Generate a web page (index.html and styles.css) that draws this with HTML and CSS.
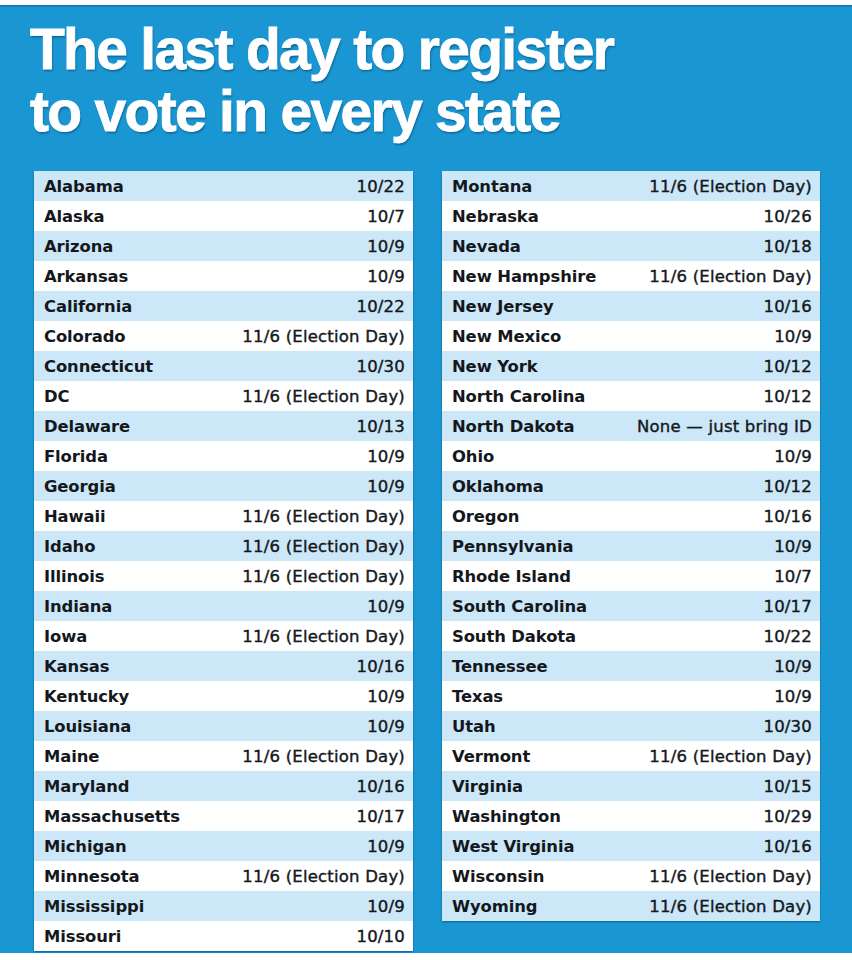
FILE: index.html
```html
<!DOCTYPE html>
<html lang="en">
<head>
<meta charset="utf-8">
<title>The last day to register to vote in every state</title>
<link rel="stylesheet" href="styles.css">
</head>
<body>
<div class="poster">
  <h1 class="title">The last day to register<br>to vote in every state</h1>
  <div class="tables">
    <div class="table">
      <div class="row"><span class="state">Alabama</span><span class="date">10/22</span></div>
      <div class="row"><span class="state">Alaska</span><span class="date">10/7</span></div>
      <div class="row"><span class="state">Arizona</span><span class="date">10/9</span></div>
      <div class="row"><span class="state">Arkansas</span><span class="date">10/9</span></div>
      <div class="row"><span class="state">California</span><span class="date">10/22</span></div>
      <div class="row"><span class="state">Colorado</span><span class="date">11/6 (Election Day)</span></div>
      <div class="row"><span class="state">Connecticut</span><span class="date">10/30</span></div>
      <div class="row"><span class="state">DC</span><span class="date">11/6 (Election Day)</span></div>
      <div class="row"><span class="state">Delaware</span><span class="date">10/13</span></div>
      <div class="row"><span class="state">Florida</span><span class="date">10/9</span></div>
      <div class="row"><span class="state">Georgia</span><span class="date">10/9</span></div>
      <div class="row"><span class="state">Hawaii</span><span class="date">11/6 (Election Day)</span></div>
      <div class="row"><span class="state">Idaho</span><span class="date">11/6 (Election Day)</span></div>
      <div class="row"><span class="state">Illinois</span><span class="date">11/6 (Election Day)</span></div>
      <div class="row"><span class="state">Indiana</span><span class="date">10/9</span></div>
      <div class="row"><span class="state">Iowa</span><span class="date">11/6 (Election Day)</span></div>
      <div class="row"><span class="state">Kansas</span><span class="date">10/16</span></div>
      <div class="row"><span class="state">Kentucky</span><span class="date">10/9</span></div>
      <div class="row"><span class="state">Louisiana</span><span class="date">10/9</span></div>
      <div class="row"><span class="state">Maine</span><span class="date">11/6 (Election Day)</span></div>
      <div class="row"><span class="state">Maryland</span><span class="date">10/16</span></div>
      <div class="row"><span class="state">Massachusetts</span><span class="date">10/17</span></div>
      <div class="row"><span class="state">Michigan</span><span class="date">10/9</span></div>
      <div class="row"><span class="state">Minnesota</span><span class="date">11/6 (Election Day)</span></div>
      <div class="row"><span class="state">Mississippi</span><span class="date">10/9</span></div>
      <div class="row"><span class="state">Missouri</span><span class="date">10/10</span></div>
    </div>
    <div class="table">
      <div class="row"><span class="state">Montana</span><span class="date">11/6 (Election Day)</span></div>
      <div class="row"><span class="state">Nebraska</span><span class="date">10/26</span></div>
      <div class="row"><span class="state">Nevada</span><span class="date">10/18</span></div>
      <div class="row"><span class="state">New Hampshire</span><span class="date">11/6 (Election Day)</span></div>
      <div class="row"><span class="state">New Jersey</span><span class="date">10/16</span></div>
      <div class="row"><span class="state">New Mexico</span><span class="date">10/9</span></div>
      <div class="row"><span class="state">New York</span><span class="date">10/12</span></div>
      <div class="row"><span class="state">North Carolina</span><span class="date">10/12</span></div>
      <div class="row"><span class="state">North Dakota</span><span class="date">None — just bring ID</span></div>
      <div class="row"><span class="state">Ohio</span><span class="date">10/9</span></div>
      <div class="row"><span class="state">Oklahoma</span><span class="date">10/12</span></div>
      <div class="row"><span class="state">Oregon</span><span class="date">10/16</span></div>
      <div class="row"><span class="state">Pennsylvania</span><span class="date">10/9</span></div>
      <div class="row"><span class="state">Rhode Island</span><span class="date">10/7</span></div>
      <div class="row"><span class="state">South Carolina</span><span class="date">10/17</span></div>
      <div class="row"><span class="state">South Dakota</span><span class="date">10/22</span></div>
      <div class="row"><span class="state">Tennessee</span><span class="date">10/9</span></div>
      <div class="row"><span class="state">Texas</span><span class="date">10/9</span></div>
      <div class="row"><span class="state">Utah</span><span class="date">10/30</span></div>
      <div class="row"><span class="state">Vermont</span><span class="date">11/6 (Election Day)</span></div>
      <div class="row"><span class="state">Virginia</span><span class="date">10/15</span></div>
      <div class="row"><span class="state">Washington</span><span class="date">10/29</span></div>
      <div class="row"><span class="state">West Virginia</span><span class="date">10/16</span></div>
      <div class="row"><span class="state">Wisconsin</span><span class="date">11/6 (Election Day)</span></div>
      <div class="row"><span class="state">Wyoming</span><span class="date">11/6 (Election Day)</span></div>
    </div>
  </div>
</div>
</body>
</html>
```

FILE: styles.css
```css
html, body {
  margin: 0;
  padding: 0;
  background: #ffffff;
}
body {
  padding-top: 5px;
  width: 852px;
  height: 960px;
  box-sizing: border-box;
  overflow: hidden;
}
.poster {
  background: #1a97d3;
  border-top: 2px solid #147cb0;
  height: 948px;
  box-sizing: border-box;
  padding-top: 11px;
}
.title {
  margin: 0 0 29px 30px;
  font-family: "Liberation Sans", Arial, sans-serif;
  font-weight: 700;
  font-size: 57px;
  line-height: 62px;
  letter-spacing: -1.7px;
  color: #ffffff;
  -webkit-text-stroke: 0.8px #ffffff;
  text-shadow: 1px 2px 2px rgba(0, 40, 70, 0.45);
}
.tables {
  display: grid;
  grid-template-columns: 379px 378px;
  column-gap: 29px;
  margin-left: 34px;
  align-items: start;
}
.table {
  background: #ffffff;
  box-shadow: 0 1px 2px rgba(0, 30, 60, 0.45);
}
.row {
  height: 30px;
  display: flex;
  align-items: center;
  justify-content: space-between;
  padding: 0 8px 0 10px;
  color: #14181c;
}
.row:nth-child(odd) {
  background: #cce7f7;
}
.state {
  font-family: "DejaVu Sans", sans-serif;
  font-weight: 700;
  font-size: 16.4px;
  letter-spacing: -0.1px;
}
.date {
  font-family: "DejaVu Sans", sans-serif;
  font-size: 16.5px;
  letter-spacing: 0.2px;
  -webkit-text-stroke: 0.4px #14181c;
}
```
